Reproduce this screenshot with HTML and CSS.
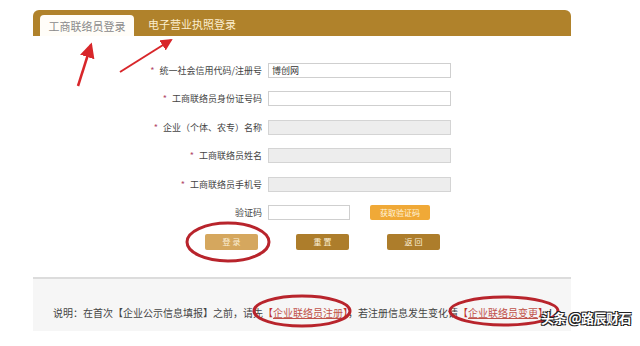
FILE: index.html
```html
<!DOCTYPE html>
<html lang="zh-CN">
<head>
  <meta charset="UTF-8" />
  <title>工商联络员登录</title>
  <link rel="stylesheet" href="styles.css">
</head>
<body>
  <div class="page">
    <div class="tabs">
      <div class="tab active">工商联络员登录</div>
      <div class="tab">电子营业执照登录</div>
    </div>

    <form class="login">
      <label><span class="star">*</span> 统一社会信用代码/注册号</label>
      <input type="text" class="field" value="博创网" />

      <label><span class="star">*</span> 工商联络员身份证号码</label>
      <input type="text" class="field" />

      <label><span class="star">*</span> 企业（个体、农专）名称</label>
      <input type="text" class="field off" disabled />

      <label><span class="star">*</span> 工商联络员姓名</label>
      <input type="text" class="field off" disabled />

      <label><span class="star">*</span> 工商联络员手机号</label>
      <input type="text" class="field off" disabled />

      <label>验证码</label>
      <div class="code-row">
        <input type="text" class="field code" />
        <button type="button" class="btn-code">获取验证码</button>
      </div>
    </form>

    <div class="actions">
      <button type="button" class="btn btn-login">登 录</button>
      <button type="button" class="btn">重 置</button>
      <button type="button" class="btn">返 回</button>
    </div>

    <div class="note">
      说明：在首次【企业公示信息填报】之前，请先<span class="br">【</span><a href="#">企业联络员注册</a><span class="br">】</span>，若注册信息发生变化请<span class="br">【</span><a href="#">企业联络员变更</a><span class="br">】</span>！
    </div>
  </div>

  <!-- 标注：箭头和圈 -->
  <svg class="marks" width="640" height="346" viewBox="0 0 640 346">
    <defs>
      <marker id="tip" markerWidth="8" markerHeight="8" refX="5" refY="3" orient="auto">
        <path d="M0,0 L6,3 L0,6 Z" fill="#d8262a" />
      </marker>
    </defs>
    <line x1="78" y1="86" x2="91" y2="45" stroke="#d8262a" stroke-width="2.5" marker-end="url(#tip)" />
    <line x1="120" y1="72" x2="171" y2="40" stroke="#d8262a" stroke-width="2" marker-end="url(#tip)" />
    <ellipse cx="228" cy="242" rx="41" ry="19" fill="none" stroke="#b8242c" stroke-width="3" />
    <ellipse cx="302" cy="311" rx="48" ry="15" fill="none" stroke="#b8242c" stroke-width="3" />
    <ellipse cx="504" cy="311" rx="54" ry="14" fill="none" stroke="#b8242c" stroke-width="3" />
  </svg>

  <div class="mark-text">头条 @路辰财石</div>
</body>
</html>
```

FILE: styles.css
```css
body {
  margin: 0;
  background: #fff;
  font-family: "Noto Sans CJK SC", "DejaVu Sans", sans-serif;
  color: #444;
  position: relative;
  width: 640px;
  height: 346px;
  overflow: hidden;
}
.page {
  width: 538px;
  margin-left: 33px;
  padding-top: 10px;
}
.tabs {
  height: 26px;
  background: #b0822b;
  border-radius: 6px 6px 0 0;
  display: flex;
  align-items: flex-end;
  padding-left: 7px;
}
.tab {
  font-size: 11px;
  color: #fcefd0;
  padding: 0 0 5px 14px;
  line-height: 14px;
}
.tab.active {
  width: 94px;
  height: 21px;
  box-sizing: border-box;
  padding: 4px 0 0;
  background: #fffdf8;
  color: #8a8a8a;
  text-align: center;
  border-radius: 4px 4px 0 0;
}
.login {
  display: grid;
  grid-template-columns: 229px 183px;
  column-gap: 6px;
  row-gap: 13.4px;
  align-items: center;
  padding-top: 27px;
  margin: 0;
}
.login label {
  font-size: 9px;
  text-align: right;
  color: #444;
  line-height: 15px;
}
.star {
  color: #b34a6a;
  margin-right: 3px;
}
.field {
  box-sizing: border-box;
  width: 183px;
  height: 15px;
  border: 1px solid #cfcfcf;
  background: #fff;
  font-size: 9px;
  font-family: inherit;
  padding: 0 3px;
  margin: 0;
  color: #333;
}
.field.off {
  background: #ededed;
  border-color: #d4d4d4;
}
.code-row {
  display: flex;
  align-items: center;
}
.field.code {
  width: 82px;
}
.btn-code {
  margin-left: 20px;
  width: 60px;
  height: 15px;
  border: none;
  border-radius: 2px;
  background: #f0a937;
  color: #fff4dc;
  font-size: 8px;
  font-family: inherit;
  padding: 0;
}
.actions {
  display: flex;
  gap: 38px;
  margin: 14px 0 0 172px;
}
.btn {
  width: 53px;
  height: 16px;
  border: none;
  border-radius: 2px;
  background: #ad7d2b;
  color: #fbefd6;
  font-size: 8px;
  font-family: inherit;
  padding: 0;
}
.btn-login {
  background: #d5a75e;
}
.note {
  margin-top: 27px;
  height: 54px;
  background: #f6f6f6;
  border-top: 2px solid #dcdcdc;
  font-size: 10px;
  color: #444;
  padding: 26px 0 0 20px;
  box-sizing: border-box;
  white-space: nowrap;
}
.note a {
  color: #c0524a;
}
.br {
  color: #c0302c;
}
.marks {
  position: absolute;
  left: 0;
  top: 0;
  pointer-events: none;
}
.mark-text {
  position: absolute;
  left: 541px;
  top: 309px;
  font-size: 13px;
  line-height: 18px;
  letter-spacing: -0.5px;
  color: #fff;
  font-weight: bold;
  text-shadow: 1px 1px 0 #222, -1px -1px 0 #222, 1px -1px 0 #222, -1px 1px 0 #222;
  white-space: nowrap;
}
```
